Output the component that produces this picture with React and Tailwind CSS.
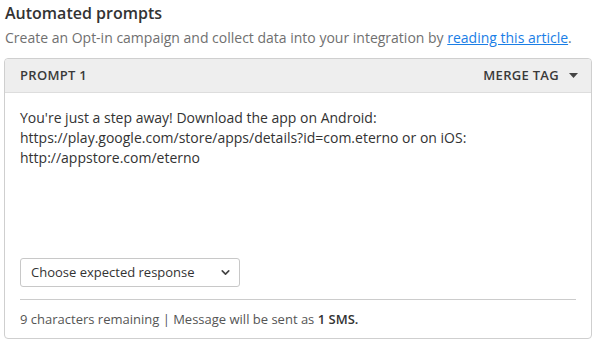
import { ChevronDown } from "lucide-react";

export default function App() {
  return (
    <div className="w-[598px] h-[349px] bg-white font-['Open_Sans',sans-serif] text-[#333]">
      <div className="pl-[5px] pt-[2px]">
        <h2 className="text-[16px] font-semibold leading-[22px] text-[#333]">Automated prompts</h2>
        <p className="text-[14px] leading-[20px] mt-[4px] text-[#707070]">
          Create an Opt-in campaign and collect data into your integration by{" "}
          <a href="#" className="text-[#1a7ee6] underline">reading this article</a>.
        </p>
      </div>

      <div className="ml-[4px] mt-[10px] w-[588px] h-[281px] border border-[#cfcfcf] rounded-[4px] flex flex-col">
        <div className="h-[34px] bg-[#eeeeee] rounded-t-[4px] border-b border-[#dddddd] flex items-center justify-between pl-[15px] pr-[13px]">
          <span className="text-[13px] font-semibold tracking-[0.3px] text-[#3a3a3a]">PROMPT 1</span>
          <button className="flex items-center gap-[10px] text-[13px] font-semibold tracking-[0.3px] text-[#3a3a3a]">
            MERGE TAG
            <svg width="9" height="5" viewBox="0 0 9 5"><path d="M0 0h9L4.5 5z" fill="#444" /></svg>
          </button>
        </div>

        <div className="flex-1 flex flex-col px-[15px]">
          <p className="mt-[15px] text-[14px] leading-[20px] text-[#333]">
            You're just a step away! Download the app on Android:<br />
            https://play.google.com/store/apps/details?id=com.eterno or on iOS:<br />
            http://appstore.com/eterno
          </p>

          <div className="mt-auto">
            <div className="w-[220px] h-[29px] border border-[#c8c8c8] rounded-[3px] flex items-center justify-between pl-[10px] pr-[7px]">
              <span className="text-[13px] text-[#333]">Choose expected response</span>
              <ChevronDown size={13} strokeWidth={3} className="text-[#444]" />
            </div>
            <div className="mt-[12px] border-t border-[#cccccc]" />
            <div className="h-[38px] pt-[1px] flex items-center text-[13px] text-[#555]">
              9 characters remaining | Message will be sent as&nbsp;<span className="font-semibold text-[#333]">1 SMS.</span>
            </div>
          </div>
        </div>
      </div>
    </div>
  );
}
